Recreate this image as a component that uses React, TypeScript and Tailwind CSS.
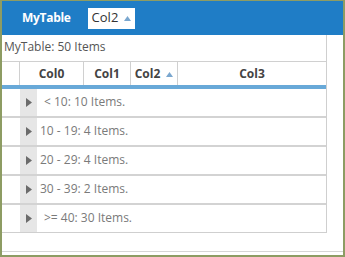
const groups = [
  { label: '< 10: 10 Items.', pad: 'pl-[7px]' },
  { label: '10 - 19: 4 Items.', pad: 'pl-[3px]' },
  { label: '20 - 29: 4 Items.', pad: 'pl-[3px]' },
  { label: '30 - 39: 2 Items.', pad: 'pl-[3px]' },
  { label: '>= 40: 30 Items.', pad: 'pl-[7px]' },
];

function Arrow() {
  return (
    <svg width="7" height="6" viewBox="0 0 7 6" className="ml-[6px]">
      <path d="M0 6 L3.5 1 L7 6 Z" fill="#7aa7cf" />
    </svg>
  );
}

export default function App() {
  return (
    <div
      className="flex h-[257px] w-[345px] flex-col border-x-2 border-b-2 border-t border-[#8d9c63] bg-white text-[12px]"
      style={{ fontFamily: '"Open Sans", "Noto Sans", sans-serif' }}
    >
      <div className="flex h-[34px] items-center bg-[#1f7dc6] pl-[20px]">
        <span className="text-[12px] font-bold tracking-tight text-white">MyTable</span>
        <div className="ml-[17px] flex h-[21px] items-center bg-white px-[4px] text-[13px] text-[#333]">
          Col2
          <Arrow />
        </div>
      </div>

      <div className="flex-1 border-b border-[#d6d6d6]">
        <div className="w-[325px] border-r border-b border-[#cfcfcf]">
          <div className="flex h-[27px] items-center border-b border-[#d0d0d0] pb-[2px] pl-[2px] text-[#555]">
            MyTable: 50 Items
          </div>

          <div className="flex h-[27px] border-b-4 border-[#68a9d8] font-bold text-[#444]">
            <div className="w-[18px] border-r border-[#d0d0d0]" />
            <div className="flex w-[64px] items-center justify-center border-r border-[#d0d0d0]">Col0</div>
            <div className="flex w-[47px] items-center justify-center border-r border-[#d0d0d0]">Col1</div>
            <div className="flex w-[47px] items-center justify-center border-r border-[#d0d0d0]">
              Col2
              <Arrow />
            </div>
            <div className="flex flex-1 items-center justify-center">Col3</div>
          </div>

          {groups.map((g, i) => (
            <div
              key={g.label}
              className={`flex ${i < groups.length - 1 ? 'h-[29px] border-b-2 border-[#d3d3d3]' : 'h-[27px]'}`}
            >
              <div className="w-[18px]" />
              <div className="flex w-[17px] items-center justify-center bg-[#e6e6e6]">
                <svg width="6" height="9" viewBox="0 0 6 9">
                  <path d="M0 0 L6 4.5 L0 9 Z" fill="#6b6b6b" />
                </svg>
              </div>
              <div className={`flex flex-1 items-center pb-[2px] text-[#7a7a7a] ${g.pad}`}>{g.label}</div>
            </div>
          ))}
        </div>
      </div>
      <div className="h-[3px]" />
    </div>
  );
}
